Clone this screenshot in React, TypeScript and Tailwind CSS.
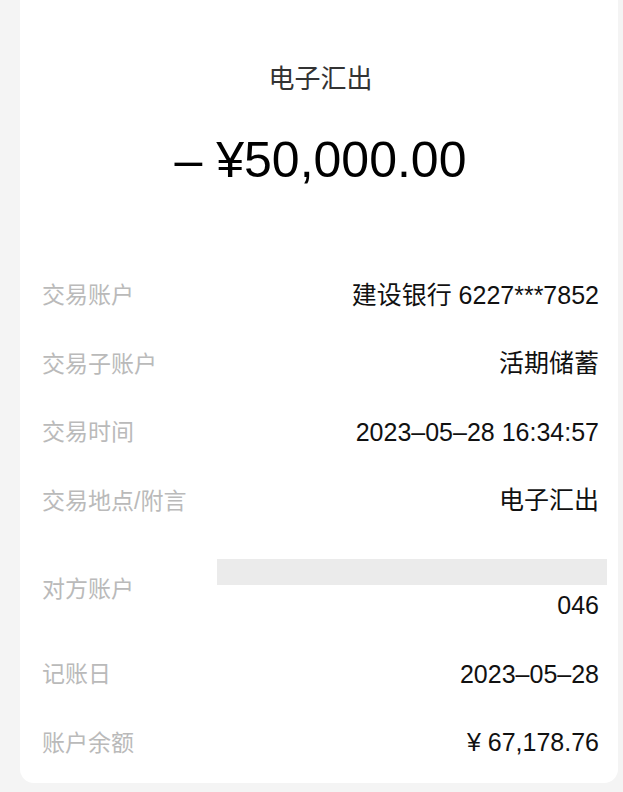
const font = { fontFamily: '"Liberation Sans", "Noto Sans CJK SC", sans-serif' };

type Row = { label: string; value: string };

const topRows: Row[] = [
  { label: "交易账户", value: "建设银行 6227***7852" },
  { label: "交易子账户", value: "活期储蓄" },
  { label: "交易时间", value: "2023–05–28 16:34:57" },
  { label: "交易地点/附言", value: "电子汇出" },
];

const bottomRows: Row[] = [
  { label: "记账日", value: "2023–05–28" },
  { label: "账户余额", value: "¥ 67,178.76" },
];

const DetailRow = ({ label, value }: Row) => (
  <div className="flex h-[68.5px] items-center justify-between">
    <span className="text-[23px] text-[#bababa]">{label}</span>
    <span className="text-[25px] text-[#111]">{value}</span>
  </div>
);

export default function App() {
  return (
    <div className="min-h-[792px] w-full bg-[#f4f4f4]" style={font}>
      <div className="ml-[20px] mr-[5px] h-[783px] rounded-b-[14px] bg-white pl-[22px] pr-[19px]">
        {/* header */}
        <div className="flex flex-col items-center pt-[61px]">
          <p className="text-[26px] leading-[36px] text-[#333]">电子汇出</p>
          <p className="mt-[33px] text-[50px] leading-[60px] text-black">– ¥50,000.00</p>
        </div>

        <div className="mt-[71px]">
          {topRows.map((r) => (
            <DetailRow key={r.label} {...r} />
          ))}

          {/* counterparty, partly masked */}
          <div className="flex items-center justify-between pt-[24px] pb-[21px]">
            <span className="text-[23px] text-[#bababa]">对方账户</span>
            <div className="flex flex-col items-end">
              <div className="-mr-[8px] h-[26px] w-[390px] bg-[#ebebeb]" />
              <span className="mt-[6px] text-[25px] leading-[28px] text-[#111]">046</span>
            </div>
          </div>

          {bottomRows.map((r) => (
            <DetailRow key={r.label} {...r} />
          ))}
        </div>
      </div>
    </div>
  );
}
